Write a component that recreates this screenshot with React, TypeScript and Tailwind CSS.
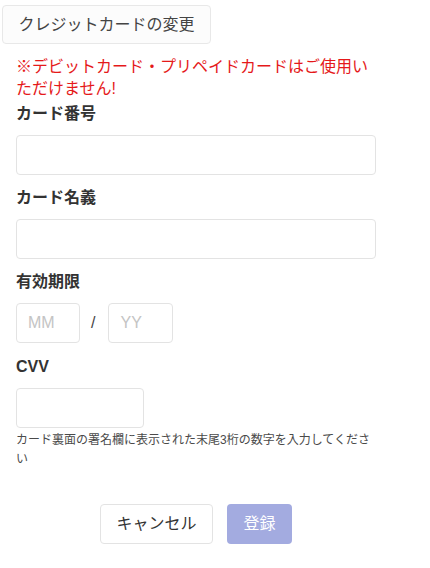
export default function App() {
  return (
    <div
      className="min-h-[568px] w-[430px] bg-white text-[#333]"
      style={{ fontFamily: '"Liberation Sans", "Noto Sans CJK JP", sans-serif' }}
    >
      {/* Top button */}
      <div className="pl-[2px] pt-[5px]">
        <button className="h-[39px] w-[209px] rounded-[4px] border border-[#e8e8e8] bg-[#fcfcfc] text-[16px] text-[#444]">
          クレジットカードの変更
        </button>
      </div>

      <div className="w-[376px] pl-4">
        {/* Warning */}
        <p className="mt-[12px] text-[16px] leading-[22px] text-[#e5191a]">
          ※デビットカード・プリペイドカードはご使用いただけません!
        </p>

        {/* Card number */}
        <label className="mt-[3px] block text-[16px] font-bold leading-[22px] text-[#333]">カード番号</label>
        <input className="mt-[10px] block h-[40px] w-[360px] rounded-[4px] border border-[#e3e3e3] px-3 text-[16px] outline-none" />

        {/* Card name */}
        <label className="mt-[12px] block text-[16px] font-bold leading-[22px] text-[#333]">カード名義</label>
        <input className="mt-[10px] block h-[40px] w-[360px] rounded-[4px] border border-[#e3e3e3] px-3 text-[16px] outline-none" />

        {/* Expiry */}
        <label className="mt-[12px] block text-[16px] font-bold leading-[22px] text-[#333]">有効期限</label>
        <div className="mt-[10px] flex items-center">
          <input
            placeholder="MM"
            className="h-[40px] w-[64px] rounded-[4px] border border-[#e3e3e3] px-[11px] text-[16px] outline-none placeholder:text-[#c4c4c4]"
          />
          <span className="ml-[11px] mr-[13px] text-[16px] text-[#444]">/</span>
          <input
            placeholder="YY"
            className="h-[40px] w-[65px] rounded-[4px] border border-[#e3e3e3] px-[11px] text-[16px] outline-none placeholder:text-[#c4c4c4]"
          />
        </div>

        {/* CVV */}
        <label className="mt-[13px] block text-[16px] font-bold leading-[22px] text-[#333]">CVV</label>
        <input className="mt-[10px] block h-[40px] w-[128px] rounded-[4px] border border-[#e3e3e3] px-3 text-[16px] outline-none" />
        <p className="mt-[3px] text-[12px] leading-[19px] text-[#4a4a4a]">
          カード裏面の署名欄に表示された末尾3桁の数字を入力してください
        </p>

        {/* Actions */}
        <div className="mt-[35px] flex justify-center gap-[14px]">
          <button className="h-[40px] w-[113px] rounded-[4px] border border-[#e3e3e3] bg-white text-[16px] text-[#333]">
            キャンセル
          </button>
          <button className="h-[40px] w-[65px] rounded-[4px] bg-[#a3abe0] text-[16px] text-white">登録</button>
        </div>
      </div>
    </div>
  );
}
